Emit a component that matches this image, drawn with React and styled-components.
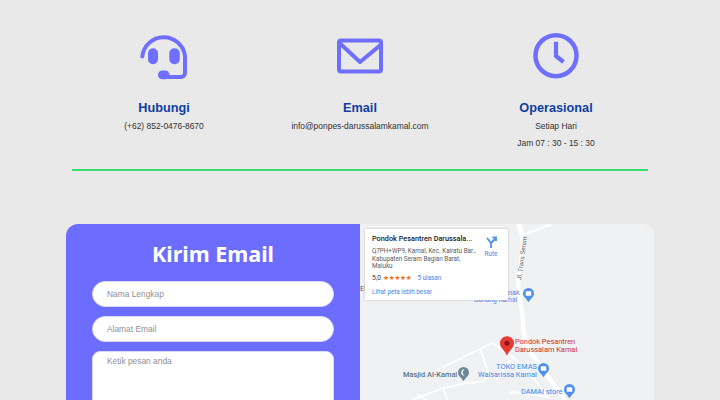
import React from "react";
import styled, { createGlobalStyle } from "styled-components";

const Global = createGlobalStyle`
  html, body { margin: 0; padding: 0; height: 400px; overflow: hidden; background: #e9e9e9; }
  * { box-sizing: border-box; }
  body { font-family: "Liberation Sans", Arial, sans-serif; }
`;
const Page = styled.div`
  width: 720px;
  height: 400px;
  overflow: hidden;
  padding: 32px 66px 0;
`;
const InfoGrid = styled.section`
  display: grid;
  grid-template-columns: repeat(3, 196px);
`;
const InfoItem = styled.div`
  display: flex;
  flex-direction: column;
  align-items: center;
  text-align: center;
`;
const IconBox = styled.div`
  width: 48px;
  height: 48px;
  margin-bottom: 21px;
  svg { display: block; }
`;
const InfoTitle = styled.h3`
  margin: 0 0 5px;
  font-size: 12.7px;
  line-height: 15px;
  font-weight: 700;
  color: #0f3ea3;
`;
const InfoText = styled.p`
  margin: 0 0 6.5px;
  font-size: 8.45px;
  line-height: 10px;
  color: #333;
`;
const Rule = styled.hr`
  height: 2px;
  margin: 15px 6px 53px;
  border: 0;
  background: #3bdc6e;
`;
const Card = styled.section`
  display: grid;
  grid-template-columns: 294px 294px;
  height: 260px;
  border-radius: 12px;
  overflow: hidden;
`;
const FormPanel = styled.form`
  display: flex;
  flex-direction: column;
  align-items: center;
  background: #6c6cff;
  padding-top: 15px;
`;
const FormTitle = styled.h2`
  margin: 0 0 13px;
  font-family: "Noto Sans", sans-serif;
  font-size: 21.5px;
  line-height: 29px;
  font-weight: 700;
  color: #fff;
`;
const Field = styled.div`
  width: 242px;
  height: ${p => (p.$area ? 100 : 26)}px;
  margin-bottom: 9px;
  padding: ${p => (p.$area ? "4px 14px" : "0 14px")};
  display: flex;
  align-items: ${p => (p.$area ? "flex-start" : "center")};
  background: #fff;
  border: 1px solid #d9d9f5;
  border-radius: ${p => (p.$area ? 8 : 13)}px;
  font-size: 8.4px;
  color: #8f8f99;
`;
const MapPanel = styled.div`
  position: relative;
  background: #f0f1f3;
  overflow: hidden;
`;
const Roads = styled.svg`
  position: absolute;
  left: 0;
  top: 0;
`;
const Label = styled.span`
  position: absolute;
  left: ${p => p.$x}px;
  top: ${p => p.$y}px;
  font-family: Roboto, sans-serif;
  font-size: ${p => p.$size || 7.4}px;
  line-height: 8px;
  white-space: nowrap;
  text-align: ${p => p.$align || "left"};
  color: ${p => p.$color};
  font-weight: ${p => p.$weight || 400};
`;
const RoadName = styled(Label)`
  transform: rotate(-82deg);
  transform-origin: left center;
`;
const Pin = styled.svg`
  position: absolute;
  left: ${p => p.$x}px;
  top: ${p => p.$y}px;
`;
const PlaceCard = styled.div`
  position: absolute;
  left: 5px;
  top: 5px;
  width: 143px;
  height: 71px;
  padding: 5px 7px;
  background: #fff;
  box-shadow: 0 0 2px rgba(0,0,0,.25);
  font-family: Roboto, sans-serif;
`;
const PlaceName = styled.div`
  font-size: 7.3px;
  line-height: 9px;
  font-weight: 500;
  color: #202124;
`;
const PlaceAddress = styled.div`
  width: 108px;
  margin-top: 5px;
  font-size: 6.3px;
  line-height: 7.5px;
  color: #5b5b5b;
`;
const RatingRow = styled.div`
  display: flex;
  align-items: center;
  margin-top: 3px;
  height: 9px;
  font-size: 6.8px;
  color: #3c4043;
`;
const Stars = styled.span`
  margin: 0 6px 0 2px;
  font-size: 6.6px;
  letter-spacing: -.2px;
  color: #e8711a;
  font-family: "DejaVu Sans", sans-serif;
`;
const LinkText = styled.span`
  font-size: 6.3px;
  color: #3f87e8;
`;
const LargerLink = styled.div`
  margin-top: 5px;
  font-size: 6.3px;
  color: #3f87e8;
`;
const Directions = styled.div`
  position: absolute;
  right: 9px;
  top: 7px;
  width: 16px;
  display: flex;
  flex-direction: column;
  align-items: center;
  gap: 2px;
  font-size: 6.3px;
  color: #3f87e8;
`;

const Headset = () => (
  <svg width="48" height="48" viewBox="0 0 48 48" fill="none">
    <path d="M2.3 24.5A21.5 21.5 0 0 1 45 24V41a4 4 0 0 1-4 4H24" stroke="#6f6fff" strokeWidth="4" strokeLinecap="round" />
    <rect x="8" y="16.3" width="10" height="16" rx="5" fill="#6f6fff" />
    <rect x="29.3" y="16.3" width="10.5" height="16" rx="5" fill="#6f6fff" />
    <rect x="18" y="38.5" width="11.5" height="8.7" rx="4.3" fill="#6f6fff" />
  </svg>
);
const Envelope = () => (
  <svg width="48" height="48" viewBox="0 0 48 48" fill="none" stroke="#6f6fff" strokeWidth="4">
    <rect x="3" y="8.5" width="42" height="31" rx="2" strokeLinejoin="round" />
    <path d="M3.5 11L24 30 44.5 13" strokeLinejoin="round" />
  </svg>
);
const Clock = () => (
  <svg width="48" height="48" viewBox="0 0 48 48" fill="none" stroke="#6f6fff">
    <circle cx="24" cy="23.7" r="20.5" strokeWidth="4.5" />
    <path d="M24 9.7V24L31.5 30" strokeWidth="4.2" />
  </svg>
);
const BluePin = ({ x, y, size = 11, glyph = "bag" }) => (
  <Pin $x={x} $y={y} width={size} height={size * 1.3} viewBox="0 0 20 26">
    <path d="M10 0a10 10 0 0 1 10 10c0 6-6 9-10 16C6 19 0 16 0 10A10 10 0 0 1 10 0z" fill={glyph === "mosque" ? "#6e8796" : "#4f8fee"} />
    {glyph === "mosque"
      ? <path d="M12 4a6 6 0 1 0 0 12 7 7 0 0 1 0-12z" fill="#fff" />
      : <rect x="5" y="6" width="10" height="8" rx="1" fill="#fff" />}
  </Pin>
);

export default function App() {
  return (
    <Page>
      <Global />
      <InfoGrid>
        <InfoItem>
          <IconBox><Headset /></IconBox>
          <InfoTitle>Hubungi</InfoTitle>
          <InfoText>(+62) 852-0476-8670</InfoText>
        </InfoItem>
        <InfoItem>
          <IconBox><Envelope /></IconBox>
          <InfoTitle>Email</InfoTitle>
          <InfoText>info@ponpes-darussalamkamal.com</InfoText>
        </InfoItem>
        <InfoItem>
          <IconBox><Clock /></IconBox>
          <InfoTitle>Operasional</InfoTitle>
          <InfoText>Setiap Hari</InfoText>
          <InfoText>Jam 07 : 30 - 15 : 30</InfoText>
        </InfoItem>
      </InfoGrid>
      <Rule />
      <Card>
        <FormPanel>
          <FormTitle>Kirim Email</FormTitle>
          <Field>Nama Lengkap</Field>
          <Field>Alamat Email</Field>
          <Field $area>Ketik pesan anda</Field>
        </FormPanel>
        <MapPanel>
          <Roads width="294" height="260" viewBox="0 0 294 260" fill="none" stroke="#fff">
            <path d="M158 -2C160 5 163 9 163 20C163 36 158 50 158 60C158 72 163 84 163 100C163 112 166 120 172 130L206 178" strokeWidth="4.5" />
            <path d="M163 11L192 0" strokeWidth="2" />
            <path d="M132 119L77 146M132 119L153 133L173 154L187 171M120 124L128 149L137 154L153 133M52 176L83 164L107 159L123 158L130 150M83 164L88 176M57 170L68 177M150 168L190 173" strokeWidth="1.8" />
          </Roads>
          <RoadName $x={159} $y={52} $size={6.4} $color="#5f6368">Jl. Trans Seram</RoadName>
          <Label $x={0} $y={61} $color="#5f6368">Ef</Label>
          <Label $x={148} $y={65} $color="#4f8fee">nak</Label>
          <Label $x={114} $y={72} $size={6.6} $color="#4f8fee">Gunung Kamal</Label>
          <BluePin x={163} y={64} />
          <Pin $x={140} $y={112} width="14" height="20" viewBox="0 0 20 28">
            <path d="M10 0a10 10 0 0 1 10 10c0 7-7 10-10 18C7 20 0 17 0 10A10 10 0 0 1 10 0z" fill="#e53935" />
            <circle cx="10" cy="10" r="3.6" fill="#8f1414" />
          </Pin>
          <Label $x={155} $y={114} $color="#c9302c">Pondok Pesantren<br />Darussalam Kamal</Label>
          <Label $x={118} $y={139} $align="right" $color="#3f87e8">TOKO EMAS<br />Waisarissa Kamal</Label>
          <BluePin x={98} y={143} glyph="mosque" />
          <Label $x={43} $y={147} $color="#5f7482" $weight={500}>Masjid Al-Kamal</Label>
          <BluePin x={204} y={160} />
          <Label $x={161} $y={164} $color="#3f87e8">DAMAI store</Label>
          <BluePin x={178} y={139} />
          <PlaceCard>
            <PlaceName>Pondok Pesantren Darussala...</PlaceName>
            <PlaceAddress>Q7PH+WP9, Kamal, Kec. Kairatu Bar., Kabupaten Seram Bagian Barat, Maluku</PlaceAddress>
            <RatingRow>
              5,0<Stars>★★★★★</Stars><LinkText>5 ulasan</LinkText>
            </RatingRow>
            <LargerLink>Lihat peta lebih besar</LargerLink>
            <Directions>
              <svg width="12" height="12" viewBox="0 0 12 12" fill="none" stroke="#4f8fee" strokeWidth="1.8">
                <path d="M6 12V7L2 2M6 7L10 3M7.5 1.5H11V5" />
              </svg>
              Rute
            </Directions>
          </PlaceCard>
        </MapPanel>
      </Card>
    </Page>
  );
}
